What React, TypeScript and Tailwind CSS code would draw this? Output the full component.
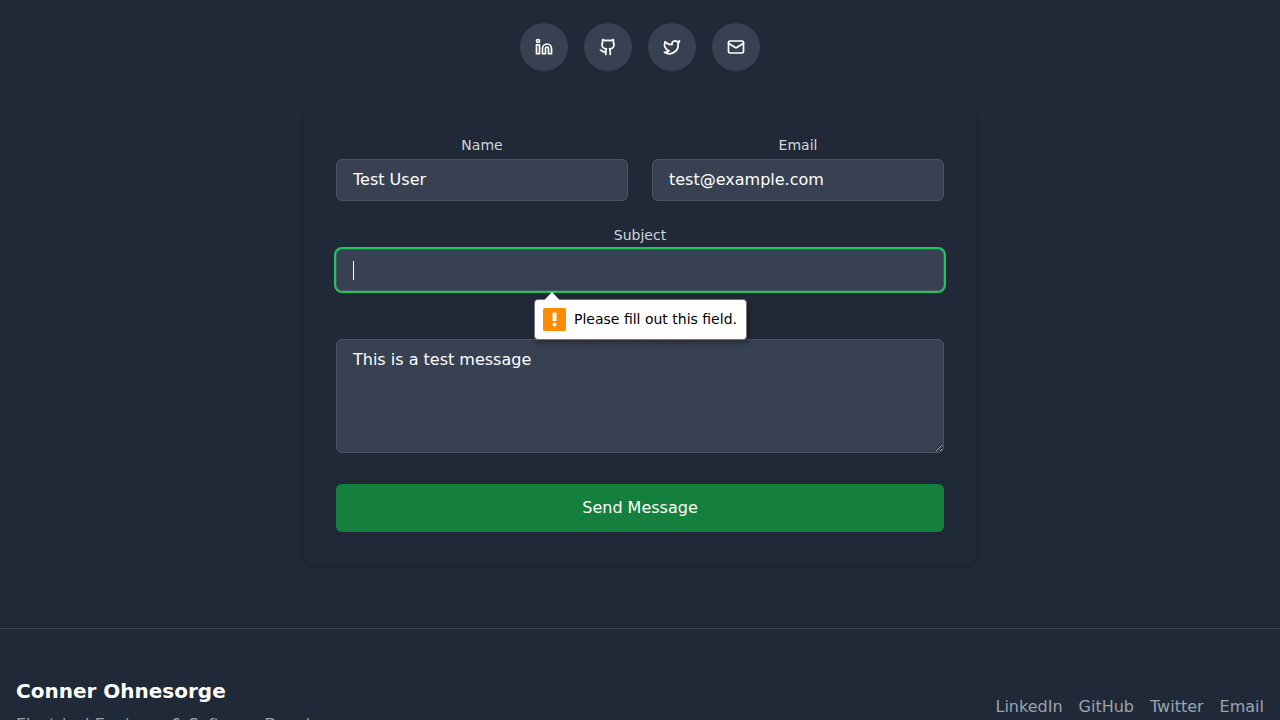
import React from "react";
import { Github, Linkedin, Mail, Twitter } from "lucide-react";

const socials = [
  { label: "LinkedIn", href: "#linkedin", Icon: Linkedin },
  { label: "GitHub", href: "#github", Icon: Github },
  { label: "Twitter", href: "#twitter", Icon: Twitter },
  { label: "Email", href: "#email", Icon: Mail },
];

const fieldClass =
  "w-full rounded-md border border-[#4b5563] bg-[#374151] px-4 py-2 text-base text-white outline-none focus:ring-2 focus:ring-[#22c55e]";
const labelClass = "mb-1 block text-sm text-[#d1d5db]";

function ValidationBubble({ message }: { message: string }) {
  return (
    <div
      role="alert"
      className="absolute top-full left-1/2 z-10 mt-2 flex h-[41px] w-[213px] -translate-x-[106px] items-start gap-2 rounded-[4px] border border-[#737373] bg-white pt-2 pl-2 text-sm whitespace-nowrap text-black shadow-[2px_3px_5px_rgba(0,0,0,0.35)]"
    >
      <svg className="absolute -top-2 left-2 h-[9px] w-[18px]" viewBox="0 0 18 9" aria-hidden="true">
        <path d="M0.5 9 L9 0 L17.5 9 Z" fill="#ffffff" />
      </svg>
      <svg className="h-[23px] w-[23px] shrink-0" viewBox="0 0 23 23" aria-hidden="true">
        <rect width="23" height="23" rx="1.5" fill="#ff8c00" />
        <path d="M9.5 4.7h4v8.3h-4z" fill="#ffffff" />
        <circle cx="11.5" cy="16.5" r="2" fill="#ffffff" />
      </svg>
      <span className="leading-[22px]">{message}</span>
    </div>
  );
}

function ContactForm() {
  return (
    <form
      noValidate
      onSubmit={(event) => event.preventDefault()}
      className="mx-auto max-w-2xl rounded-lg bg-[#1f2937] p-8 text-center shadow-md"
    >
      <div className="mb-6 grid grid-cols-2 gap-6">
        <div>
          <label htmlFor="name" className={labelClass}>Name</label>
          <input id="name" type="text" defaultValue="Test User" className={fieldClass} />
        </div>
        <div>
          <label htmlFor="email" className={labelClass}>Email</label>
          <input id="email" type="email" defaultValue="test@example.com" className={fieldClass} />
        </div>
      </div>
      <div className="mb-6">
        <label htmlFor="subject" className={labelClass}>Subject</label>
        <div className="relative">
          <input id="subject" type="text" required autoFocus className={`${fieldClass} peer caret-transparent`} />
          {/* Steady text cursor, shown while the empty field has focus */}
          <span
            aria-hidden="true"
            className="pointer-events-none absolute top-3 left-[17px] hidden h-[19px] w-px bg-white peer-focus:peer-invalid:block"
          />
          <ValidationBubble message="Please fill out this field." />
        </div>
      </div>
      <div className="mb-6">
        <label htmlFor="message" className={labelClass}>Message</label>
        <textarea id="message" rows={4} defaultValue="This is a test message" className={fieldClass} />
      </div>
      <button type="submit" className="w-full rounded-md bg-[#15803d] px-6 py-3 text-white">
        Send Message
      </button>
    </form>
  );
}

export default function App() {
  return (
    <div className="min-h-screen bg-[#1f2937] font-['DejaVu_Sans',sans-serif] text-base text-white">
      <main className="px-4 pt-[23px] pb-16">
        <nav aria-label="Social profiles" className="mb-8 flex justify-center gap-4">
          {socials.map(({ label, href, Icon }) => (
            <a
              key={label}
              href={href}
              aria-label={label}
              className="flex size-12 items-center justify-center rounded-full bg-[#374151]"
            >
              <Icon size={18} strokeWidth={2.3} />
            </a>
          ))}
        </nav>
        <ContactForm />
      </main>
      <footer className="border-t border-[#374151] px-4 py-12">
        <div className="flex items-center justify-between">
          <div>
            <h2 className="text-xl font-bold">Conner Ohnesorge</h2>
            <p className="mt-2 text-[#9ca3af]">Electrical Engineer &amp; Software Developer</p>
          </div>
          <nav aria-label="Footer" className="flex gap-4 text-[#9ca3af]">
            {socials.map(({ label, href }) => (
              <a key={label} href={href}>{label}</a>
            ))}
          </nav>
        </div>
      </footer>
    </div>
  );
}
